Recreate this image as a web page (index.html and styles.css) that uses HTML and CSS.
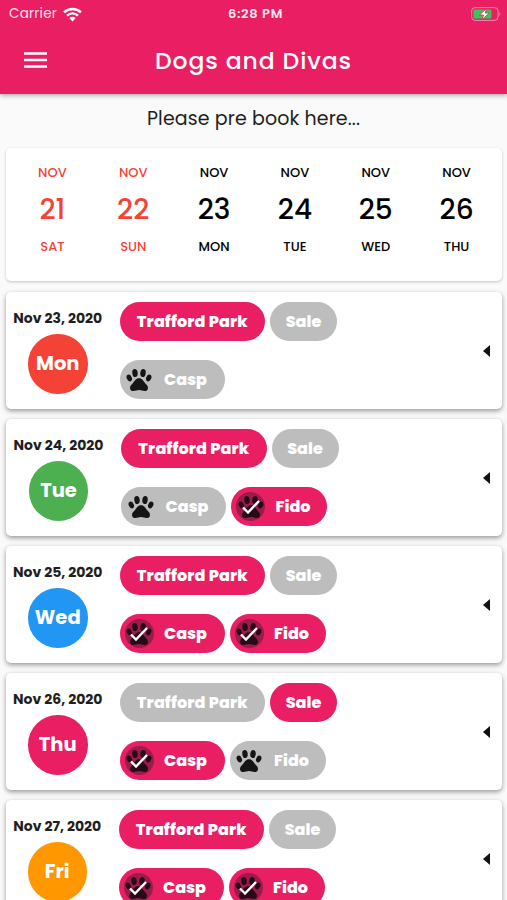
FILE: index.html
```html
<!DOCTYPE html>
<html lang="en">
<head>
<meta charset="utf-8">
<title>Dogs and Divas</title>
<link rel="stylesheet" href="styles.css">
</head>
<body>
<svg width="0" height="0" class="defs">
  <symbol id="paw" viewBox="0 0 26 24">
    <ellipse cx="9" cy="5" rx="2.7" ry="4" transform="rotate(-8 9 5)"/>
    <ellipse cx="17" cy="5" rx="2.7" ry="4" transform="rotate(8 17 5)"/>
    <ellipse cx="3.3" cy="10" rx="2.5" ry="3.5" transform="rotate(-25 3.3 10)"/>
    <ellipse cx="22.7" cy="10" rx="2.5" ry="3.5" transform="rotate(25 22.7 10)"/>
    <path d="M13 10.3c-3.200 0-4.100 2.500-6 4.600-1.500 1.600-3 2.700-3 5 0 2 1.400 3.100 3.300 3.100 2.100 0 3.500-.9 5.700-.9s3.600.9 5.700.9c1.900 0 3.300-1.100 3.300-3.100 0-2.300-1.500-3.400-3-5-1.900-2.100-2.800-4.600-6-4.600z"/>
  </symbol>
</svg>
<header class="appbar">
  <div class="status">
    <div class="carrier"><span>Carrier</span>
      <svg class="wifi" viewBox="0 0 18 14"><path d="M1 5.100a11.500 11.500 0 0 1 16 0M3.800 8a7.500 7.500 0 0 1 10.400 0" fill="none" stroke="#fff" stroke-width="2.300"/><path d="M6 10.400a4.300 4.300 0 0 1 6 0L9 13.600z" fill="#fff"/></svg>
    </div>
    <span class="time">6:28 PM</span>
    <svg class="battery" viewBox="0 0 31 14"><rect x=".6" y=".6" width="26.500" height="12.800" rx="3.500" fill="none" stroke="#f48bb0"/><rect x="2.500" y="2.500" width="18" height="9" rx="1.500" fill="#35c759"/><path d="M28.500 4.800q1.800 2.200 0 4.400z" fill="#f48bb0"/><path d="M15.500 1.500L8.500 8h4l-1.500 4.700L18.300 6h-4z" fill="#fff" stroke="#e91e63" stroke-width=".8"/></svg>
  </div>
  <div class="toolbar">
    <svg class="menu" viewBox="0 0 23 16"><path d="M0 1.400h23M0 7.900h23M0 14.400h23" stroke="#fff" stroke-width="2.500"/></svg>
    <h1>Dogs and Divas</h1>
  </div>
</header>
<p class="lead">Please pre book here...</p>
<section class="calendar">
  <div class="day weekend"><span>NOV</span><b>21</b><span>SAT</span></div>
  <div class="day weekend"><span>NOV</span><b>22</b><span>SUN</span></div>
  <div class="day"><span>NOV</span><b>23</b><span>MON</span></div>
  <div class="day"><span>NOV</span><b>24</b><span>TUE</span></div>
  <div class="day"><span>NOV</span><b>25</b><span>WED</span></div>
  <div class="day"><span>NOV</span><b>26</b><span>THU</span></div>
</section>
<main class="bookings" id="bookings"></main>
<script src="script.js"></script>
</body>
</html>
```
FILE: styles.css
```css
* { box-sizing: border-box; }
html { height: 900px; overflow: hidden; }
body { margin: 0; height: 900px; overflow: hidden; background: #fafafa; color: #1f1f1f; font-family: Poppins, Inter, "Open Sans", sans-serif; }
.defs { position: absolute; }
.appbar { height: 94px; background: #e91e63; color: #fff; box-shadow: 0 1px 5px rgba(0,0,0,.4); }
.status { height: 28px; padding: 0 5px 0 9px; display: grid; grid-template-columns: 1fr auto 1fr; align-items: center; font-size: 13.500px; }
.carrier { display: flex; align-items: center; gap: 6px; color: #fde3ec; letter-spacing: .25px; }
.wifi { width: 19px; height: 15px; }
.time { font-weight: 600; font-size: 13px; letter-spacing: .7px; color: #fdeaf1; }
.battery { width: 31px; height: 14px; justify-self: end; }
.toolbar { height: 64px; display: grid; grid-template-columns: 47px 1fr 47px; align-items: center; }
.menu { width: 23px; height: 16px; margin-left: 24px; }
h1 { margin: 0; text-align: center; font-size: 23.500px; font-weight: 500; letter-spacing: .9px; }
.lead { margin: 0; height: 54px; line-height: 50px; text-align: center; font-size: 19px; letter-spacing: .1px; }
.calendar { margin: 0 5px 0 6px; height: 133px; padding: 15px 5px 0 6px; background: #fff; border-radius: 5px; box-shadow: 0 1px 3px rgba(0,0,0,.22); display: grid; grid-template-columns: repeat(6, 1fr); }
.day { display: flex; flex-direction: column; align-items: center; color: #000; font-size: 13px; font-weight: 500; line-height: 20px; }
.day b { font-size: 28px; line-height: 54px; font-weight: 500; }
.weekend { color: #f44336; }
.bookings { margin: 11px 5px 0 6px; display: flex; flex-direction: column; gap: 10px; }
.card { flex: none; height: 117px; background: #fff; border-radius: 5px; box-shadow: 0 2px 5px rgba(0,0,0,.4); display: flex; padding-right: 12px; align-items: flex-start; }
.when { width: 103.500px; margin-right: 10px; padding-top: 16px; display: flex; flex-direction: column; align-items: center; }
.when.wide { width: 105px; }
.when.narrow { width: 102.500px; }
.date { font-size: 14px; line-height: 20px; font-weight: 700; white-space: nowrap; }
.circle { margin-top: 6px; width: 59.500px; height: 59.500px; border-radius: 50%; display: grid; place-items: center; color: #fff; font-size: 19.500px; font-weight: 700; }
.red { background: #f44336; } .green { background: #4caf50; } .blue { background: #2196f3; } .pink { background: #e91e63; } .orange { background: #ff9800; }
.chips { flex: 1; padding-top: 9.500px; display: flex; flex-direction: column; gap: 19.500px; }
.row { display: flex; gap: 5px; }
.chip { height: 39px; border-radius: 20px; background: #bdbdbd; color: #fff; font-size: 16px; font-weight: 800; display: flex; align-items: center; justify-content: center; white-space: nowrap; }
.chip.on { background: #e91e63; }
.park { width: 145.500px; letter-spacing: .1px; }
.sale { width: 67px; }
.dog { justify-content: flex-start; padding-left: 5px; }
.dog.casp { width: 105px; }
.dog.fido { width: 96px; }
.avatar { width: 29px; height: 29px; border-radius: 50%; margin-right: 10.500px; display: grid; place-items: center; }
.avatar svg { grid-area: 1 / 1; }
.paw { width: 26px; height: 24px; fill: #151515; }
.on .avatar { background: #9b1b4b; }
.on .paw { fill: #260a16; }
.check { width: 18px; height: 14px; fill: none; stroke: #fff; stroke-width: 2.400; }
.arrow { align-self: center; width: 7px; height: 12px; }
```
FILE: script.js
```js
const days = [
  { date: "Nov 23, 2020", day: "Mon", color: "red", site: "park", dogs: { Casp: false } },
  { date: "Nov 24, 2020", day: "Tue", color: "green", size: "wide", site: "park", dogs: { Casp: false, Fido: true } },
  { date: "Nov 25, 2020", day: "Wed", color: "blue", site: "park", dogs: { Casp: true, Fido: true } },
  { date: "Nov 26, 2020", day: "Thu", color: "pink", site: "sale", dogs: { Casp: true, Fido: false } },
  { date: "Nov 27, 2020", day: "Fri", color: "orange", size: "narrow", site: "park", dogs: { Casp: true, Fido: true } }
];
const check = '<svg class="check" viewBox="0 0 18 14"><path d="M1 7.500l5 5L17 1"/></svg>';
const dogChip = ([name, on]) => `<div class="chip dog ${name.toLowerCase()} ${on ? "on" : ""}"><span class="avatar"><svg class="paw"><use href="#paw"/></svg>${on ? check : ""}</span><span>${name}</span></div>`;
document.getElementById("bookings").innerHTML = days.map(d => `
  <article class="card">
    <div class="when ${d.size || ""}"><span class="date">${d.date}</span><span class="circle ${d.color}">${d.day}</span></div>
    <div class="chips">
      <div class="row"><div class="chip park ${d.site === "park" ? "on" : ""}">Trafford Park</div><div class="chip sale ${d.site === "sale" ? "on" : ""}">Sale</div></div>
      <div class="row">${Object.entries(d.dogs).map(dogChip).join("")}</div>
    </div>
    <svg class="arrow" viewBox="0 0 7 12"><path d="M7 0v12L0 6z" fill="#111"/></svg>
  </article>`).join("");
```
